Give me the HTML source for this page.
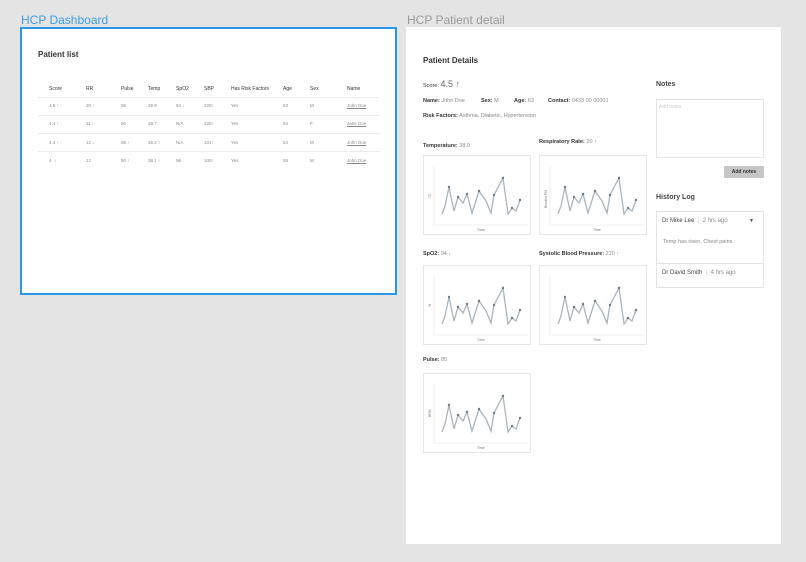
<!DOCTYPE html>
<html><head><meta charset="utf-8"><style>
*{margin:0;padding:0;box-sizing:border-box}
body{width:806px;height:562px;background:#e4e4e4;font-family:"Liberation Sans",sans-serif;position:relative;overflow:hidden;color:#333}
.a{position:absolute;white-space:nowrap}
.t1{left:21px;top:13px;font-size:12px;color:#3a9ee4}
.t2{left:407px;top:13px;font-size:12px;color:#9a9a9a}
#f1{position:absolute;left:20px;top:27px;width:377px;height:268px;background:#fff;border:2px solid #2d95e6}
#f2{position:absolute;left:406px;top:27px;width:375px;height:517px;background:#fff}
.th{font-size:5px;color:#333}
.td{font-size:4.5px;color:#888}
.ln{position:absolute;left:38px;width:342px;height:1px;background:#ececec}
.h{font-size:8px;font-weight:bold;color:#333}
.s{font-size:5.5px;color:#888}
.s b{color:#333}
.box{position:absolute;width:108px;height:80px;border:1px solid #e6e6e6;background:#fff}
.lbl{font-size:5.5px;color:#888}.lbl b{color:#333}
</style></head><body>
<div class="a t1">HCP Dashboard</div>
<div class="a t2">HCP Patient detail</div>
<div id="f1"></div>
<div id="f2"></div>

<div class="a h" style="left:38px;top:50px">Patient list</div>
<div class="a th" style="left:49px;top:86px">Score</div>
<div class="a th" style="left:86px;top:86px">RR</div>
<div class="a th" style="left:121px;top:86px">Pulse</div>
<div class="a th" style="left:148px;top:86px">Temp</div>
<div class="a th" style="left:176px;top:86px">SpO2</div>
<div class="a th" style="left:204px;top:86px">SBP</div>
<div class="a th" style="left:231px;top:86px">Has Risk Factors</div>
<div class="a th" style="left:283px;top:86px">Age</div>
<div class="a th" style="left:310px;top:86px">Sex</div>
<div class="a th" style="left:347px;top:86px">Name</div>
<div class="ln" style="top:97px"></div>
<div class="ln" style="top:115px"></div>
<div class="ln" style="top:133px"></div>
<div class="ln" style="top:151px"></div>

<div class="a td" style="left:49px;top:103px">4.5 ↑</div><div class="a td" style="left:86px;top:103px">20 ↑</div><div class="a td" style="left:121px;top:103px">85</div><div class="a td" style="left:148px;top:103px">38.9</div><div class="a td" style="left:176px;top:103px">94 ↓</div><div class="a td" style="left:204px;top:103px">220↑</div><div class="a td" style="left:231px;top:103px">Yes</div><div class="a td" style="left:283px;top:103px">63</div><div class="a td" style="left:310px;top:103px">M</div><div class="a td" style="left:347px;top:103px;text-decoration:underline">John Doe</div>

<div class="a td" style="left:49px;top:121px">4.4 ↑</div><div class="a td" style="left:86px;top:121px">11 ↑</div><div class="a td" style="left:121px;top:121px">90</div><div class="a td" style="left:148px;top:121px">38.7</div><div class="a td" style="left:176px;top:121px">N/A</div><div class="a td" style="left:204px;top:121px">220↑</div><div class="a td" style="left:231px;top:121px">Yes</div><div class="a td" style="left:283px;top:121px">64</div><div class="a td" style="left:310px;top:121px">F</div><div class="a td" style="left:347px;top:121px;text-decoration:underline">Jane Doe</div>

<div class="a td" style="left:49px;top:140px">4.4 ↑</div><div class="a td" style="left:86px;top:140px">12 ↓</div><div class="a td" style="left:121px;top:140px">88 ↑</div><div class="a td" style="left:148px;top:140px">38.2 ↑</div><div class="a td" style="left:176px;top:140px">N/A</div><div class="a td" style="left:204px;top:140px">101↑</div><div class="a td" style="left:231px;top:140px">Yes</div><div class="a td" style="left:283px;top:140px">54</div><div class="a td" style="left:310px;top:140px">M</div><div class="a td" style="left:347px;top:140px;text-decoration:underline">John Doe</div>

<div class="a td" style="left:49px;top:158px">4 &nbsp;↑</div><div class="a td" style="left:86px;top:158px">12</div><div class="a td" style="left:121px;top:158px">50 ↑</div><div class="a td" style="left:148px;top:158px">38.1 ↑</div><div class="a td" style="left:176px;top:158px">96</div><div class="a td" style="left:204px;top:158px">100↑</div><div class="a td" style="left:231px;top:158px">Yes</div><div class="a td" style="left:283px;top:158px">55</div><div class="a td" style="left:310px;top:158px">M</div><div class="a td" style="left:347px;top:158px;text-decoration:underline">John Doe</div>

<div class="a h" style="left:423px;top:56px">Patient Details</div>
<div class="a s" style="left:423px;top:79px"><b style="font-weight:normal;color:#333">Score:</b> <span style="font-size:9px;color:#666">4.5 ↑</span></div>
<div class="a s" style="left:423px;top:98px"><b>Name:</b> John Doe</div>
<div class="a s" style="left:481px;top:98px"><b>Sex:</b> M</div>
<div class="a s" style="left:514px;top:98px"><b>Age:</b> 63</div>
<div class="a s" style="left:548px;top:98px"><b>Contact:</b> 0433 00 00001</div>
<div class="a s" style="left:423px;top:113px"><b>Risk Factors:</b> Asthma, Diabetic, Hypertension</div>

<div class="a lbl" style="left:423px;top:143px"><b>Temperature:</b> 38.9</div>
<div class="a lbl" style="left:539px;top:139px"><b>Respiratory Rate:</b> 20 ↑</div>
<div class="a lbl" style="left:423px;top:251px"><b>SpO2:</b> 94 ↓</div>
<div class="a lbl" style="left:539px;top:251px"><b>Systolic Blood Pressure:</b> 220 ↑</div>
<div class="a lbl" style="left:423px;top:357px"><b>Pulse:</b> 85</div>

<svg width="0" height="0" style="position:absolute"><defs>
<g id="ch">
<path d="M10 10V69H105" fill="none" stroke="#ececec" stroke-width="0.8"/>
<polyline points="18,58 21,50 25,31 30,55 34,41 39,47 43,38 48,57 55,35 62,45 67,57 70,39 79,22 84,58 88,52 92,55 96,44" fill="none" stroke="#a9b4bd" stroke-width="1.3"/>
<g fill="#6f7a83"><circle cx="25" cy="31" r="1.2"/><circle cx="34" cy="41" r="1.2"/><circle cx="43" cy="38" r="1.2"/><circle cx="55" cy="35" r="1.2"/><circle cx="70" cy="39" r="1.2"/><circle cx="79" cy="22" r="1.2"/><circle cx="88" cy="52" r="1.2"/><circle cx="96" cy="44" r="1.2"/></g>
<text x="53" y="75" font-size="3.5" fill="#777" font-family="Liberation Sans">Time</text>
</g></defs></svg>

<div class="box" style="left:423px;top:155px"><svg width="108" height="80"><use href="#ch"/><text transform="translate(7,42) rotate(-90)" font-size="4" fill="#777" font-family="Liberation Sans">°C</text></svg></div>
<div class="box" style="left:539px;top:155px"><svg width="108" height="80"><use href="#ch"/><text transform="translate(7,52) rotate(-90)" font-size="3.5" fill="#777" font-family="Liberation Sans">Breaths PM</text></svg></div>
<div class="box" style="left:423px;top:265px"><svg width="108" height="80"><use href="#ch"/><text transform="translate(7,41) rotate(-90)" font-size="3.5" fill="#777" font-family="Liberation Sans">%</text></svg></div>
<div class="box" style="left:539px;top:265px"><svg width="108" height="80"><use href="#ch"/></svg></div>
<div class="box" style="left:423px;top:373px"><svg width="108" height="80"><use href="#ch"/><text transform="translate(7,43) rotate(-90)" font-size="3.5" fill="#777" font-family="Liberation Sans">BPM</text></svg></div>

<div class="a" style="left:656px;top:81px;font-size:7px;font-weight:bold;color:#444">Notes</div>
<div class="a" style="left:656px;top:99px;width:108px;height:59px;border:1px solid #e3e3e3"></div>
<div class="a" style="left:659px;top:104px;font-size:5px;color:#ccc">Add notes</div>
<div class="a" style="left:724px;top:166px;width:40px;height:12px;background:#c6c6c6;font-size:5px;font-weight:bold;color:#333;text-align:center;line-height:12px">Add notes</div>
<div class="a" style="left:656px;top:194px;font-size:7px;font-weight:bold;color:#444">History Log</div>
<div class="a" style="left:656px;top:211px;width:108px;height:77px;border:1px solid #e3e3e3"></div>
<div class="a" style="left:657px;top:263px;width:106px;height:1px;background:#e3e3e3"></div>
<div class="a" style="left:662px;top:218px;font-size:6px;color:#444">Dr Mike Lee <span style="color:#ccc">&nbsp;|&nbsp;</span> <span style="color:#888">2 hrs ago</span></div>
<div class="a" style="left:749px;top:218px;font-size:5px;color:#444">▼</div>
<div class="a" style="left:663px;top:239px;font-size:5.5px;color:#888">Temp has risen. Chest pains.</div>
<div class="a" style="left:662px;top:270px;font-size:6px;color:#444">Dr David Smith <span style="color:#ccc">&nbsp;|&nbsp;</span> <span style="color:#888">4 hrs ago</span></div>
</body></html>
